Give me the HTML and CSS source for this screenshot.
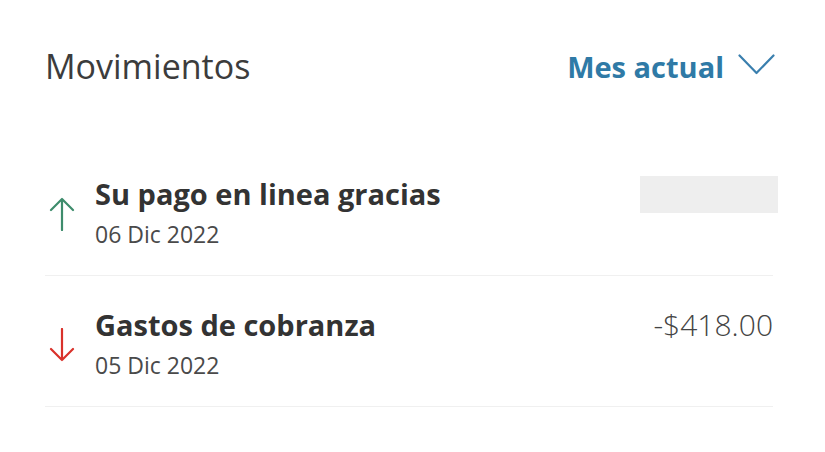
FILE: index.html
```html
<!DOCTYPE html>
<html lang="es">
<head>
<meta charset="utf-8">
<link rel="stylesheet" href="styles.css">
</head>
<body>
<div class="page">
  <div class="header">
    <h1 class="title">Movimientos</h1>
    <button class="filter">
      <span>Mes actual</span>
      <svg class="chev" width="37" height="21" viewBox="0 0 37 21"><path d="M1.5 1.5 L18.5 19 L35.5 1.5" fill="none" stroke="#3a7fae" stroke-width="2.2" stroke-linecap="round" stroke-linejoin="round"/></svg>
    </button>
  </div>
  <ul class="list">
    <li class="row">
      <div class="icon">
        <svg width="26" height="34" viewBox="0 0 26 34"><path d="M13 33 V2 M2 13 L13 2 L24 13" fill="none" stroke="#3e8c6c" stroke-width="2.2" stroke-linecap="round" stroke-linejoin="round"/></svg>
      </div>
      <div class="info">
        <div class="name">Su pago en linea gracias</div>
        <div class="date">06 Dic 2022</div>
      </div>
      <div class="amount"><div class="placeholder"></div></div>
    </li>
    <li class="row">
      <div class="icon">
        <svg width="26" height="34" viewBox="0 0 26 34"><path d="M13 1 V32 M2 21 L13 32 L24 21" fill="none" stroke="#d9322b" stroke-width="2.2" stroke-linecap="round" stroke-linejoin="round"/></svg>
      </div>
      <div class="info">
        <div class="name">Gastos de cobranza</div>
        <div class="date">05 Dic 2022</div>
      </div>
      <div class="amount"><span class="value">-$418.00</span></div>
    </li>
  </ul>
</div>
</body>
</html>
```
FILE: styles.css
```css
* { box-sizing: border-box; }
html, body { margin: 0; padding: 0; background: #ffffff; }
body { font-family: "Open Sans", "Noto Sans", sans-serif; color: #333333; }
.page { padding: 38px 52px 0 45px; }
.header { display: flex; justify-content: space-between; align-items: center; height: 56px; }
.title { margin: 0; font-size: 34px; font-weight: 400; color: #3c3c3c; letter-spacing: 0; }
.filter { display: flex; align-items: center; gap: 14px; border: 0; background: none; padding: 0; font-family: inherit; font-size: 29px; font-weight: 700; color: #2f7aa6; margin-right: -2px; }
.chev { display: block; margin-top: -4px; }
.list { list-style: none; margin: 51px 0 0 0; padding: 0; }
.row { display: flex; align-items: center; border-bottom: 1px solid #f0f0f0; height: 131px; padding-top: 8px; }
.icon { width: 50px; display: flex; align-items: center; justify-content: flex-start; padding-left: 4px; }
.icon svg { display: block; }
.info { flex: 1; display: flex; flex-direction: column; gap: 7px; margin-bottom: 4px; }
.name { font-size: 29px; font-weight: 700; color: #333333; line-height: 36px; }
.date { font-size: 23px; color: #4a4a4a; line-height: 30px; }
.amount { align-self: flex-start; padding-top: 23px; }
.placeholder { width: 138px; height: 37px; background: #eeeeee; margin-right: -5px; }
.value { font-size: 30px; font-weight: 300; color: #444444; line-height: 36px; }
```
